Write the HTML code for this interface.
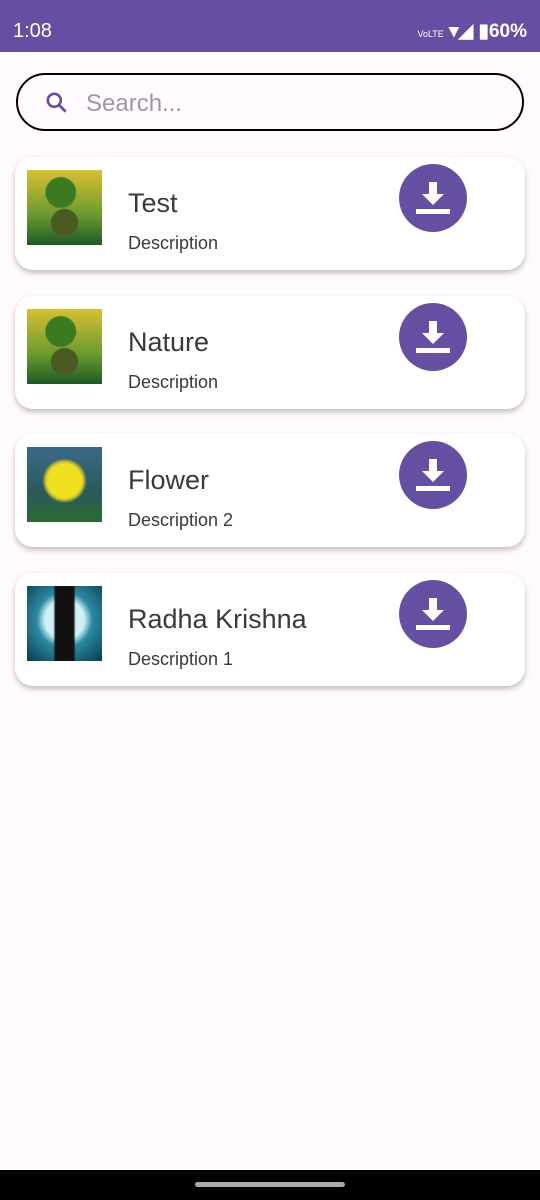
<!DOCTYPE html>
<html><head><style>
body{margin:0;width:540px;height:1200px;background:#fffbfe;font-family:"Liberation Sans",sans-serif;position:relative;overflow:hidden}
.sb{position:absolute;left:0;top:0;width:540px;height:52px;background:#654fa3;color:#fff}
.sb .t{position:absolute;left:13px;top:20px;font-size:20px}
.sb .r{position:absolute;right:13px;top:20px;font-size:19px;font-weight:bold}
.search{position:absolute;left:16px;top:73px;width:504px;height:54px;border:2px solid #000;border-radius:29px;box-sizing:content-box}
.search span{position:absolute;left:68px;top:15px;font-size:24px;color:#9c98a0}
.card{position:absolute;left:15px;width:510px;height:113px;background:#fff;border-radius:18px;box-shadow:0 3px 6px rgba(0,0,0,.25)}
.img{position:absolute;left:12px;top:13px;width:75px;height:75px}
.ti{position:absolute;left:113px;top:31px;font-size:27px;color:#3a3a3a}
.de{position:absolute;left:113px;top:76px;font-size:18px;color:#3a3a3a}
.btn{position:absolute;left:384px;top:7px;width:68px;height:68px;border-radius:50%;background:#654fa3}
.nav{position:absolute;left:0;top:1170px;width:540px;height:30px;background:#000}
.nav div{position:absolute;left:195px;top:12px;width:150px;height:5px;border-radius:3px;background:#aaa}
</style></head><body>
<div class="sb"><div class="t">1:08</div><div class="r"><span style="font-size:9px;font-weight:normal">VoLTE</span> ▾◢ ▮60%</div></div>
<div class="search"><svg style="position:absolute;left:26px;top:15px" width="26" height="26" viewBox="0 0 24 24"><circle cx="9.5" cy="9.5" r="6" fill="none" stroke="#654fa3" stroke-width="2.4"/><path d="M14 14l6 6" stroke="#654fa3" stroke-width="2.6"/></svg><span>Search...</span></div>

<div class="card" style="top:157px"><div class="img" style="background:radial-gradient(circle at 45% 30%,#3a7a20 0 22%,transparent 24%),radial-gradient(circle at 50% 70%,#4a5a20 0 20%,transparent 22%),linear-gradient(#d8c030,#6a9a30 60%,#1d5a25)"></div><div class="ti">Test</div><div class="de">Description</div><div class="btn"><svg width="68" height="68" viewBox="0 0 68 68"><path d="M30 18h8v12h7l-11 11-11-11h7z" fill="#fff"/><rect x="17" y="45" width="34" height="5" fill="#fff"/></svg></div></div>

<div class="card" style="top:296px"><div class="img" style="background:radial-gradient(circle at 45% 30%,#3a7a20 0 22%,transparent 24%),radial-gradient(circle at 50% 70%,#4a5a20 0 20%,transparent 22%),linear-gradient(#d8c030,#6a9a30 60%,#1d5a25)"></div><div class="ti">Nature</div><div class="de">Description</div><div class="btn"><svg width="68" height="68" viewBox="0 0 68 68"><path d="M30 18h8v12h7l-11 11-11-11h7z" fill="#fff"/><rect x="17" y="45" width="34" height="5" fill="#fff"/></svg></div></div>

<div class="card" style="top:434px"><div class="img" style="background:radial-gradient(circle at 50% 45%,#f0e020 0 30%,#c8c030 34%,transparent 40%),linear-gradient(#3a6a8a,#2a5a5a 60%,#2a6a30)"></div><div class="ti">Flower</div><div class="de">Description 2</div><div class="btn"><svg width="68" height="68" viewBox="0 0 68 68"><path d="M30 18h8v12h7l-11 11-11-11h7z" fill="#fff"/><rect x="17" y="45" width="34" height="5" fill="#fff"/></svg></div></div>

<div class="card" style="top:573px"><div class="img" style="background:linear-gradient(90deg,transparent 35%,#111 38% 62%,transparent 65%),radial-gradient(circle at 50% 45%,#d0f0f8 0 35%,#2a8aa0 50%,#0a3a50)"></div><div class="ti">Radha Krishna</div><div class="de">Description 1</div><div class="btn"><svg width="68" height="68" viewBox="0 0 68 68"><path d="M30 18h8v12h7l-11 11-11-11h7z" fill="#fff"/><rect x="17" y="45" width="34" height="5" fill="#fff"/></svg></div></div>

<div class="nav"><div></div></div>
</body></html>
